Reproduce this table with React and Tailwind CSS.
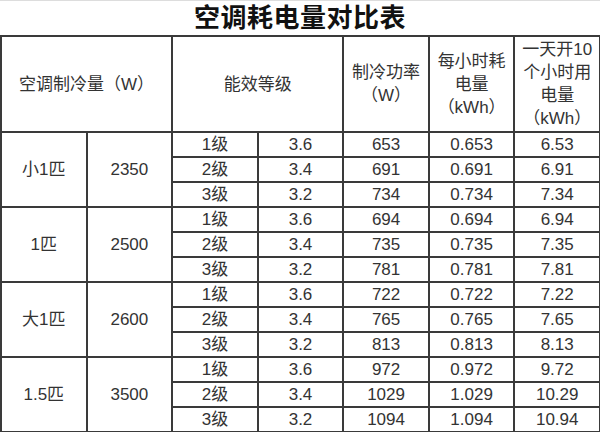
const groups = [
  {
    name: '小1匹',
    watt: '2350',
    rows: [
      ['1级', '3.6', '653', '0.653', '6.53'],
      ['2级', '3.4', '691', '0.691', '6.91'],
      ['3级', '3.2', '734', '0.734', '7.34'],
    ],
  },
  {
    name: '1匹',
    watt: '2500',
    rows: [
      ['1级', '3.6', '694', '0.694', '6.94'],
      ['2级', '3.4', '735', '0.735', '7.35'],
      ['3级', '3.2', '781', '0.781', '7.81'],
    ],
  },
  {
    name: '大1匹',
    watt: '2600',
    rows: [
      ['1级', '3.6', '722', '0.722', '7.22'],
      ['2级', '3.4', '765', '0.765', '7.65'],
      ['3级', '3.2', '813', '0.813', '8.13'],
    ],
  },
  {
    name: '1.5匹',
    watt: '3500',
    rows: [
      ['1级', '3.6', '972', '0.972', '9.72'],
      ['2级', '3.4', '1029', '1.029', '10.29'],
      ['3级', '3.2', '1094', '1.094', '10.94'],
    ],
  },
];

const cell = 'bg-white flex items-center justify-center text-center';

export default function App() {
  return (
    <div
      className="w-[600px] h-[432px] bg-white text-[#333] overflow-hidden"
      style={{ fontFamily: '"Liberation Sans", "Noto Sans CJK SC", sans-serif' }}
    >
      {/* Title */}
      <div className="h-[35px] flex items-center justify-center border-t border-[#ddd]">
        <h1 className="text-[26px] font-bold text-[#111] leading-none tracking-[0.5px]">空调耗电量对比表</h1>
      </div>

      {/* Table */}
      <div className="grid grid-cols-7 grid-rows-[94px_repeat(12,23px)] gap-[2px] bg-[#3a3a3a] pt-[2px] pl-[2px] pr-[1px] pb-[1px] text-[17px] leading-[23px]">
        <div className={`${cell} col-span-2`}>空调制冷量（W）</div>
        <div className={`${cell} col-span-2`}>能效等级</div>
        <div className={`${cell} flex-col`}>
          <span>制冷功率</span>
          <span>（W）</span>
        </div>
        <div className={`${cell} flex-col`}>
          <span>每小时耗</span>
          <span>电量</span>
          <span>（kWh）</span>
        </div>
        <div className={`${cell} flex-col`}>
          <span>一天开10</span>
          <span>个小时用</span>
          <span>电量</span>
          <span>（kWh）</span>
        </div>

        {groups.map((g) =>
          g.rows.map((r, i) => (
            <Row key={g.name + i} g={g} r={r} first={i === 0} />
          ))
        )}
      </div>
    </div>
  );
}

function Row({ g, r, first }) {
  return (
    <>
      {first && <div className={`${cell} row-span-3`}>{g.name}</div>}
      {first && <div className={`${cell} row-span-3`}>{g.watt}</div>}
      {r.map((v, j) => (
        <div key={j} className={cell}>
          {v}
        </div>
      ))}
    </>
  );
}
